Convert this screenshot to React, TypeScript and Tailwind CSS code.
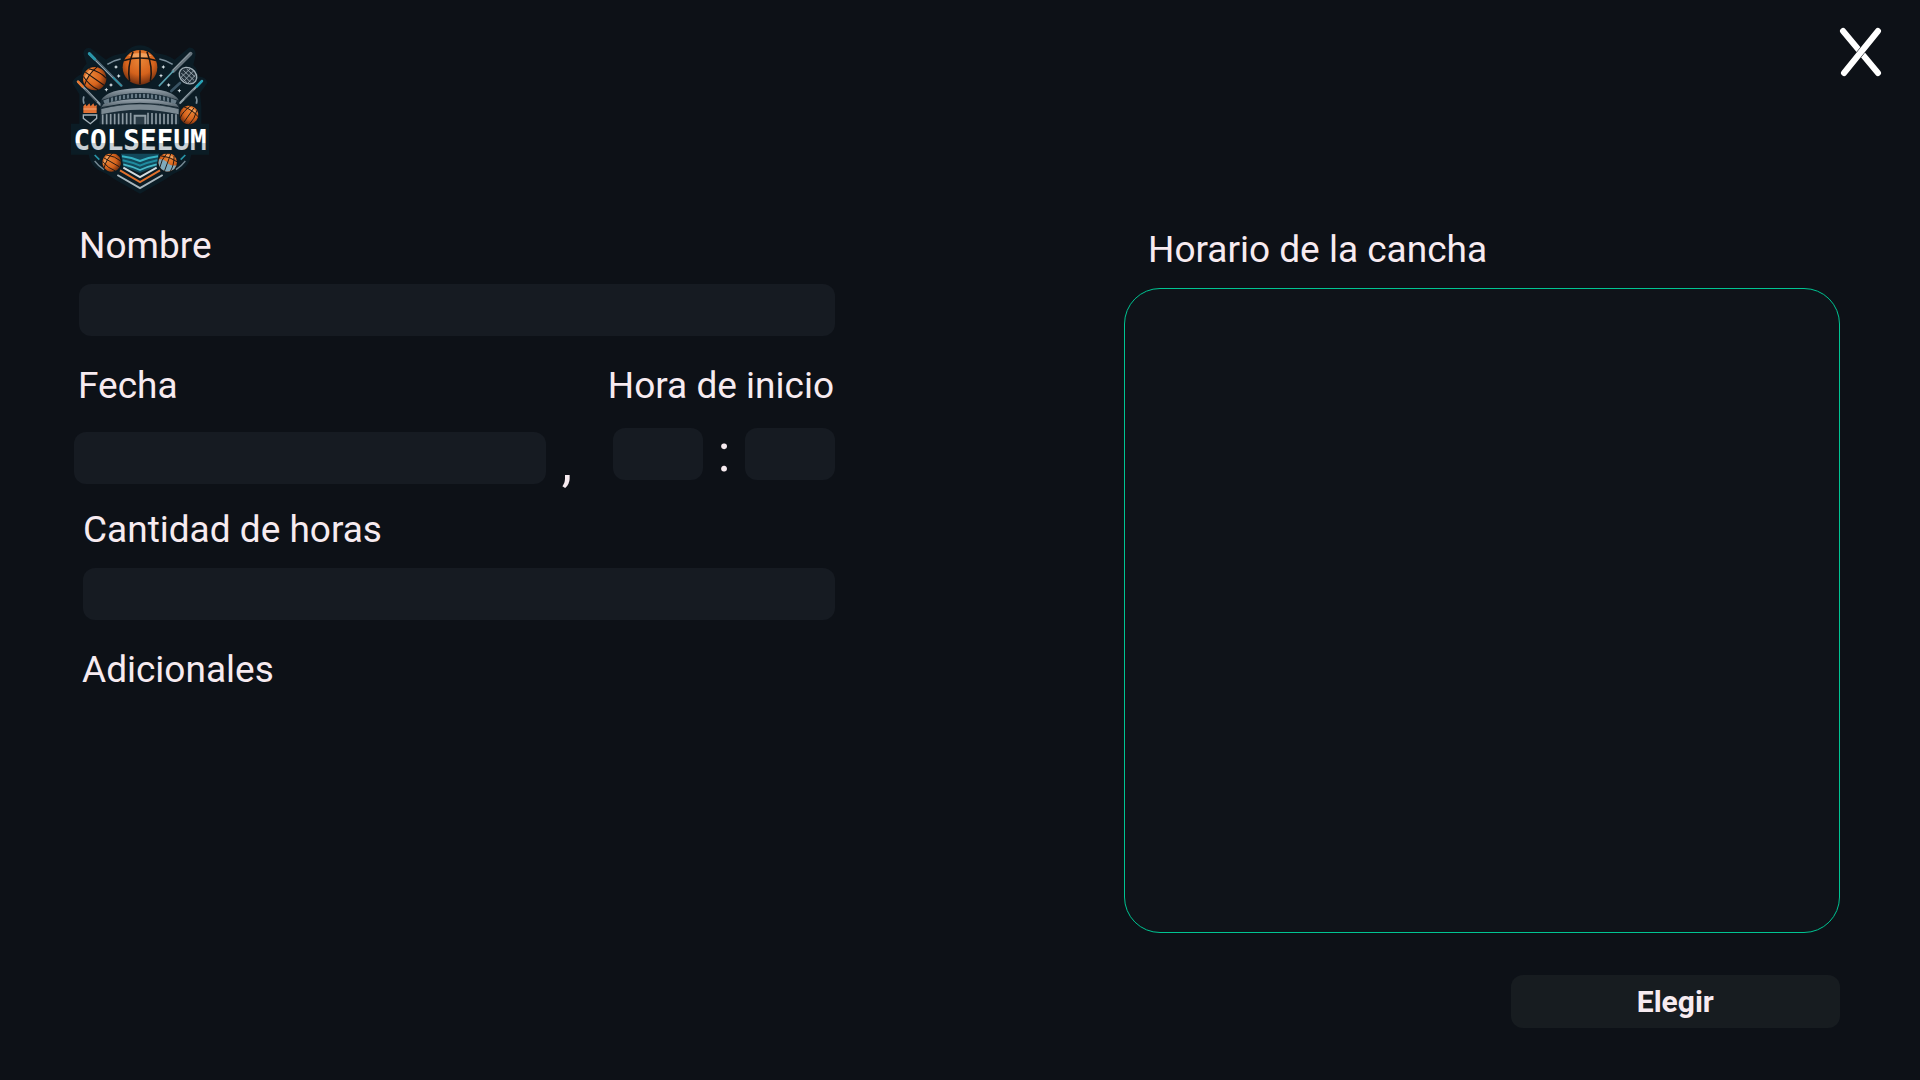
import React from "react";

function Ball({ x, y, r, tilt = 0, half = false }: { x: number; y: number; r: number; tilt?: number; half?: boolean }) {
  return (
    <g transform={`translate(${x} ${y}) rotate(${tilt}) scale(${r / 50})`}>
      <circle r="54" fill="#0b1a22" />
      <circle r="50" fill="url(#ball)" />
      {half && <path d="M-49 0A49 49 0 0 0 49 0Q20 14 0 2Q-24 -12 -49 0Z" fill="#7fa9bb" />}
      <path d="M-34 -34Q0 -48 34 -34Q16 -26 0 -27Q-20 -27 -34 -34Z" fill="#f8b070" opacity=".7" />
      <g fill="none" stroke="#1a1412" strokeWidth="4.5">
        <path d="M0 -49V49" />
        <path d="M-46 -20Q0 -34 46 -20" />
        <path d="M-20 -45Q-38 0 -30 40" />
        <path d="M20 -45Q38 0 30 40" />
      </g>
    </g>
  );
}

const columns = [128, 140, 152, 164, 176, 188, 200, 212, 264, 276, 288, 300, 312, 324, 336, 348];
const arches = [150, 162, 174, 186, 198, 210, 222, 234, 246, 258, 270, 282, 294, 306, 318, 330];
const stars = [
  [168, 94], [176, 121], [153, 148], [139, 162], [310, 94], [303, 120], [326, 148], [358, 165],
];

function Logo() {
  return (
    <svg viewBox="30 25 420 450" className="mt-5 h-[150px] w-[140px]" role="img" aria-label="Colseeum">
      <defs>
        <radialGradient id="ball" cx=".5" cy=".3" r=".75">
          <stop offset="0" stopColor="#ea8536" />
          <stop offset=".55" stopColor="#d5621c" />
          <stop offset="1" stopColor="#5d250e" />
        </radialGradient>
        <linearGradient id="steel" x1="0" y1="0" x2="0" y2="1">
          <stop offset="0" stopColor="#9aa6af" />
          <stop offset="1" stopColor="#46555f" />
        </linearGradient>
        <linearGradient id="word" x1="0" y1="0" x2="0" y2="1">
          <stop offset=".58" stopColor="#ffffff" />
          <stop offset=".6" stopColor="#c9d0d5" />
        </linearGradient>
      </defs>

      {/* shield */}
      <path
        d="M240 29Q268 30 286 52Q322 56 344 72L386 36Q406 34 407 58L400 88Q416 104 414 122Q440 124 442 142L420 172L424 212V264H447V357H394Q388 388 366 402Q340 412 314 432L240 474L166 432Q140 412 114 402Q92 388 86 357H33V264H58V176L37 142Q38 128 66 114Q64 98 80 84L70 54Q72 34 92 38L138 72Q160 56 196 52Q212 30 240 29Z"
        fill="#0b1c25"
      />
      <g fill="none" stroke="#7d909c" strokeWidth="5">
        <path d="M142 86Q160 74 182 70" />
        <path d="M298 70Q320 74 338 86" />
        <path d="M72 182Q68 190 72 204" />
        <path d="M407 182Q413 192 409 204" />
      </g>

      {/* bats, cue and racket */}
      <g strokeLinecap="round" fill="none">
        <path d="M88 54L184 150" stroke="#536b79" strokeWidth="8" />
        <path d="M88 54L104 70" stroke="#2996aa" strokeWidth="9" />
        <path d="M108 76L160 128" stroke="#b8c3c9" strokeWidth="2" />
        <path d="M160 126L184 150" stroke="#2795a8" strokeWidth="4" />
        <path d="M392 54L340 106" stroke="#67747d" strokeWidth="11" />
        <path d="M390 53L340 102" stroke="#a9b3b9" strokeWidth="2" />
        <path d="M340 106L298 150" stroke="#5aa1af" strokeWidth="5" />
        <path d="M54 138L122 208" stroke="#8d9ba4" strokeWidth="7" />
        <path d="M54 138L68 153" stroke="#e97831" strokeWidth="7" />
        <path d="M76 162L110 198" stroke="#0b1c25" strokeWidth="2" />
        <path d="M426 136L360 202" stroke="#93a2aa" strokeWidth="7" />
        <path d="M426 136L410 153" stroke="#22a3b8" strokeWidth="7" />
        <path d="M400 164L374 190" stroke="#0b1c25" strokeWidth="2" />
        <path d="M360 142L334 166" stroke="#3a5464" strokeWidth="8" />
      </g>
      <ellipse cx="384" cy="120" rx="28" ry="23" transform="rotate(35 384 120)" fill="#23313b" stroke="#a3b0b8" strokeWidth="4" />
      <path
        d="M364 112L392 140M370 104L402 134M380 100L406 124M362 124L382 142M402 104L370 138M392 98L362 126M408 116L384 142"
        stroke="#a3b0b8"
        strokeWidth="2.5"
      />
      {stars.map(([x, y]) => (
        <path key={`${x}-${y}`} d={`M${x} ${y - 6}l2 4 4 2-4 2-2 4-2-4-4-2 4-2Z`} fill="#d7e2e7" />
      ))}

      {/* arena */}
      <path d="M122 196Q136 160 240 156Q344 160 358 196V266H118Z" fill="#182a35" />
      <path d="M124 194Q140 160 240 157Q340 160 356 194Q300 172 240 172Q180 172 124 194Z" fill="url(#steel)" />
      <path d="M132 200Q180 180 240 180Q300 180 348 200" fill="none" stroke="#687b87" strokeWidth="12" />
      {arches.map((x) => {
        const y = 178 + Math.pow((x - 240) / 90, 2) * 14;
        return <path key={x} d={`M${x} ${y - 5}V${y + 9}`} stroke="#122530" strokeWidth="5" />;
      })}
      <path d="M130 206Q180 190 240 190Q300 190 350 206L358 218Q300 204 240 204Q180 204 122 218Z" fill="url(#steel)" />
      <path d="M124 216Q180 203 240 203Q300 203 356 216" fill="none" stroke="#14252f" strokeWidth="3" />
      <path d="M124 220Q180 206 240 206Q300 206 356 220V236Q300 222 240 222Q180 222 124 236Z" fill="#7b8992" />
      {columns.map((x) => (
        <path key={x} d={`M${x} ${230 + Math.abs(x - 240) / 18}V266`} stroke="#8c9aa3" strokeWidth="5" />
      ))}
      <path d="M224 266V240H256V266" fill="#2b3c47" stroke="#8c9aa3" strokeWidth="6" />

      {/* side emblems */}
      <path d="M70 232V212L76 205L80 212L88 203L92 212L100 203L104 212L110 207V232Z" fill="#e07134" />
      <path d="M70 220H110" stroke="#f6c29c" strokeWidth="2" />
      <path d="M70 238H110V248L91 264L70 248Z" fill="#0b1c25" stroke="#a3b0b8" strokeWidth="4" />

      <Ball x={240} y={95} r={52} />
      <Ball x={104} y={129} r={35} tilt={-55} />
      <Ball x={387} y={238} r={28} tilt={35} />

      {/* lower chevrons */}
      <path d="M182 350H298L290 392L240 412L190 392Z" fill="#12485a" />
      <g fill="none">
        <path d="M186 362Q216 366 240 376Q264 366 294 362" stroke="#36b3c4" strokeWidth="6" />
        <path d="M188 374Q216 380 240 390Q264 380 292 374" stroke="#1f8ba0" strokeWidth="6" />
        <path d="M190 386Q216 392 240 403Q264 392 290 386" stroke="#46b8c8" strokeWidth="5" />
        <path d="M190 396L240 424L290 396" stroke="#d3dce0" strokeWidth="6" />
        <path d="M180 404L240 439L300 404" stroke="#e0702c" strokeWidth="6" />
        <path d="M172 418L240 457L308 418" stroke="#a9b6bd" strokeWidth="6" />
        <path d="M104 358L118 372M376 358L362 372" stroke="#2795a8" strokeWidth="5" />
        <path d="M104 376Q116 392 132 402M376 376Q364 392 348 402" stroke="#738792" strokeWidth="4" />
      </g>
      <Ball x={155} y={380} r={28} tilt={-60} />
      <Ball x={323} y={380} r={28} tilt={20} half />

      <path d="M33 268H447V354H33Z" fill="#0b1c25" />
      <text
        x="240"
        y="342"
        textAnchor="middle"
        fontFamily="'DejaVu Sans Mono', monospace"
        fontWeight="700"
        fontSize="83"
        fill="url(#word)"
      >
        COLSEEUM
      </text>
    </svg>
  );
}

const label = "text-[37px] leading-11 whitespace-nowrap";
const field = "h-[52px] w-full rounded-xl bg-[#161b22] px-4 text-2xl outline-none";

export default function App() {
  return (
    <div className="flex min-h-screen flex-col bg-[#0d1117] font-['Roboto',sans-serif] text-[#f7ebf0]">
      <header className="flex items-start justify-between pt-6 pr-9 pl-[70px]">
        <Logo />
        <button type="button" aria-label="Cerrar" className="cursor-pointer">
          <svg viewBox="0 0 48 56" className="h-14 w-12" fill="none" strokeLinecap="round">
            <path d="M7 7L42 49" stroke="#fff" strokeWidth="6" />
            <path d="M42 7L8 49" stroke="#0d1117" strokeWidth="7" strokeLinecap="butt" />
            <path d="M42 7L8 49" stroke="#fff" strokeWidth="6" />
          </svg>
        </button>
      </header>

      <form className="mt-[30px] grid flex-1 grid-cols-[761fr_716fr] gap-x-[289px] pr-20 pb-[52px] pl-[74px]">
        <section className="flex flex-col">
          <div className="flex flex-col gap-4 pl-[5px]">
            <label htmlFor="nombre" className={label}>Nombre</label>
            <input id="nombre" type="text" className={field} />
          </div>

          <div className="mt-7 flex items-stretch">
            <div className="flex min-w-0 flex-1 flex-col gap-6">
              <label htmlFor="fecha" className={`${label} pl-1`}>Fecha</label>
              <input id="fecha" type="text" className={field} />
            </div>
            <span className="w-[62px] shrink-0 self-end pl-4 text-[52px] leading-10">,</span>
            <div className="flex flex-col items-end gap-5">
              <label htmlFor="hora" className={`${label} pr-px`}>Hora de inicio</label>
              <div className="flex items-center">
                <input id="hora" type="text" className="h-[52px] w-[90px] rounded-xl bg-[#161b22] px-4 text-2xl outline-none" />
                <span className="w-[42px] text-center text-[52px] leading-11">:</span>
                <input aria-label="Minutos" type="text" className="h-[52px] w-[90px] rounded-xl bg-[#161b22] px-4 text-2xl outline-none" />
              </div>
            </div>
          </div>

          <div className="mt-6 flex flex-col gap-4 pl-[9px]">
            <label htmlFor="cantidad" className={label}>Cantidad de horas</label>
            <input id="cantidad" type="text" className={field} />
          </div>

          <h2 className={`${label} mt-7 pl-2`}>Adicionales</h2>
        </section>

        <section className="flex flex-col pt-1">
          <h2 className={`${label} pl-6`}>Horario de la cancha</h2>
          <div className="mt-4 flex-1 rounded-[36px] border border-[#00c492] bg-[#0f1319]" />
          <button
            type="button"
            className="mt-[42px] h-[53px] w-[46%] cursor-pointer self-end rounded-xl bg-[#171c20] text-[30px] leading-9 font-bold"
          >
            Elegir
          </button>
        </section>
      </form>
    </div>
  );
}
